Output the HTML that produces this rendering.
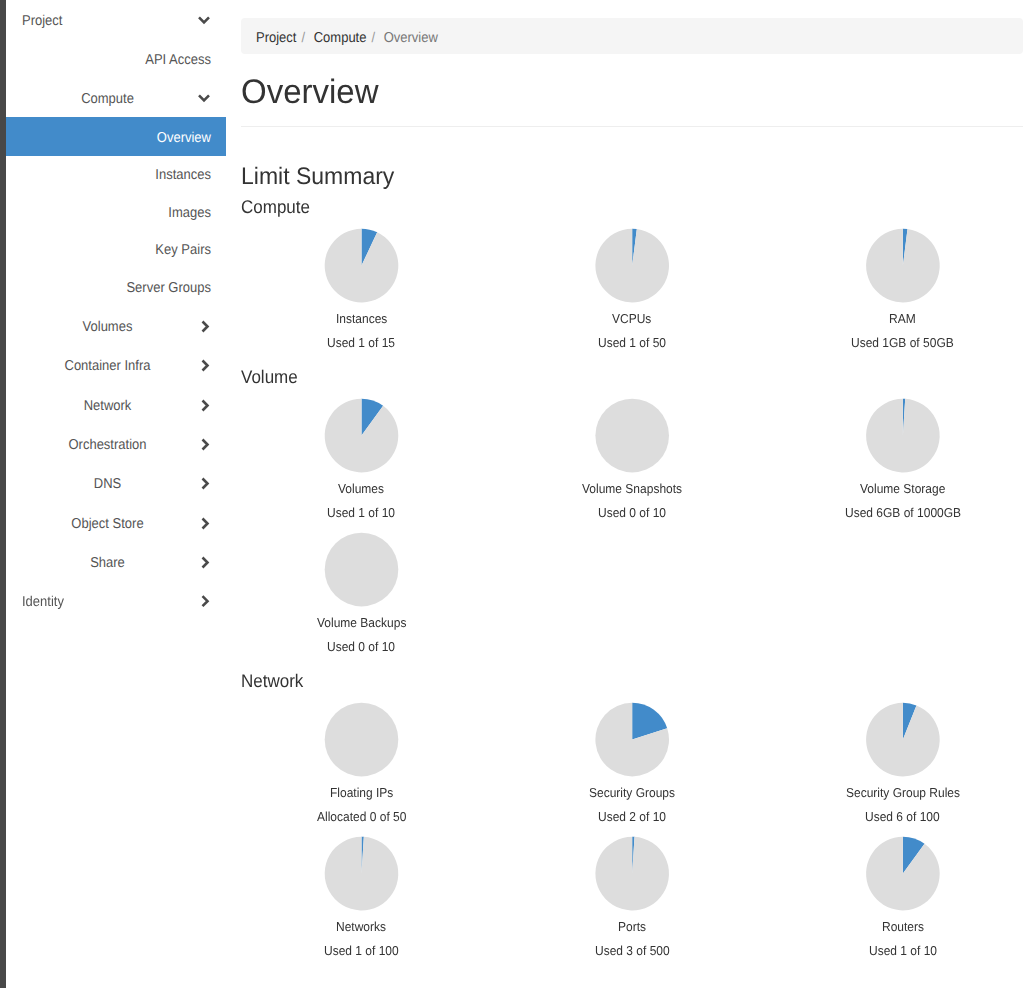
<!DOCTYPE html>
<html><head><meta charset="utf-8"><style>
html,body{margin:0;padding:0;background:#fff;width:1036px;height:988px;overflow:hidden;font-family:'Liberation Sans', sans-serif;text-rendering:geometricPrecision;}
</style></head><body>
<svg style="position:absolute;left:0;top:0" width="1036" height="988"><polyline points="199,17.3 204,22.3 209,17.3" fill="none" stroke="#4a4a4a" stroke-width="2.6" stroke-linecap="butt"/><polyline points="199,95.4 204,100.4 209,95.4" fill="none" stroke="#4a4a4a" stroke-width="2.6" stroke-linecap="butt"/><polyline points="202.5,321.5 207.5,326.5 202.5,331.5" fill="none" stroke="#4a4a4a" stroke-width="2.6" stroke-linecap="butt"/><polyline points="202.5,360.5 207.5,365.5 202.5,370.5" fill="none" stroke="#4a4a4a" stroke-width="2.6" stroke-linecap="butt"/><polyline points="202.5,400.5 207.5,405.5 202.5,410.5" fill="none" stroke="#4a4a4a" stroke-width="2.6" stroke-linecap="butt"/><polyline points="202.5,439.5 207.5,444.5 202.5,449.5" fill="none" stroke="#4a4a4a" stroke-width="2.6" stroke-linecap="butt"/><polyline points="202.5,478.5 207.5,483.5 202.5,488.5" fill="none" stroke="#4a4a4a" stroke-width="2.6" stroke-linecap="butt"/><polyline points="202.5,518.5 207.5,523.5 202.5,528.5" fill="none" stroke="#4a4a4a" stroke-width="2.6" stroke-linecap="butt"/><polyline points="202.5,557.5 207.5,562.5 202.5,567.5" fill="none" stroke="#4a4a4a" stroke-width="2.6" stroke-linecap="butt"/><polyline points="202.5,596.2 207.5,601.2 202.5,606.2" fill="none" stroke="#4a4a4a" stroke-width="2.6" stroke-linecap="butt"/><path d="M361.5,265.6 L361.5,228.8 A36.8,36.8 0 0 1 377.169,232.302 Z" fill="#428bca"/><path d="M361.5,265.6 L377.169,232.302 A36.8,36.8 0 1 1 361.5,228.8 Z" fill="#ddd"/><path d="M632.2,265.6 L632.2,228.8 A36.8,36.8 0 0 1 636.812,229.090 Z" fill="#428bca"/><path d="M632.2,265.6 L636.812,229.090 A36.8,36.8 0 1 1 632.2,228.8 Z" fill="#ddd"/><path d="M902.9000000000001,265.6 L902.9000000000001,228.8 A36.8,36.8 0 0 1 907.512,229.090 Z" fill="#428bca"/><path d="M902.9000000000001,265.6 L907.512,229.090 A36.8,36.8 0 1 1 902.9000000000001,228.8 Z" fill="#ddd"/><path d="M361.5,435.6 L361.5,398.8 A36.8,36.8 0 0 1 383.130,405.828 Z" fill="#428bca"/><path d="M361.5,435.6 L383.130,405.828 A36.8,36.8 0 1 1 361.5,398.8 Z" fill="#ddd"/><circle cx="632.2" cy="435.6" r="36.8" fill="#ddd"/><path d="M902.9000000000001,435.6 L902.9000000000001,398.8 A36.8,36.8 0 0 1 905.211,398.873 Z" fill="#428bca"/><path d="M902.9000000000001,435.6 L905.211,398.873 A36.8,36.8 0 1 1 902.9000000000001,398.8 Z" fill="#ddd"/><circle cx="361.5" cy="569.6" r="36.8" fill="#ddd"/><circle cx="361.5" cy="739.6" r="36.8" fill="#ddd"/><path d="M632.2,739.6 L632.2,702.8000000000001 A36.8,36.8 0 0 1 667.199,728.228 Z" fill="#428bca"/><path d="M632.2,739.6 L667.199,728.228 A36.8,36.8 0 1 1 632.2,702.8000000000001 Z" fill="#ddd"/><path d="M902.9000000000001,739.6 L902.9000000000001,702.8000000000001 A36.8,36.8 0 0 1 916.447,705.384 Z" fill="#428bca"/><path d="M902.9000000000001,739.6 L916.447,705.384 A36.8,36.8 0 1 1 902.9000000000001,702.8000000000001 Z" fill="#ddd"/><path d="M361.5,873.6 L361.5,836.8000000000001 A36.8,36.8 0 0 1 363.811,836.873 Z" fill="#428bca"/><path d="M361.5,873.6 L363.811,836.873 A36.8,36.8 0 1 1 361.5,836.8000000000001 Z" fill="#ddd"/><path d="M632.2,873.6 L632.2,836.8000000000001 A36.8,36.8 0 0 1 634.511,836.873 Z" fill="#428bca"/><path d="M632.2,873.6 L634.511,836.873 A36.8,36.8 0 1 1 632.2,836.8000000000001 Z" fill="#ddd"/><path d="M902.9000000000001,873.6 L902.9000000000001,836.8000000000001 A36.8,36.8 0 0 1 924.530,843.828 Z" fill="#428bca"/><path d="M902.9000000000001,873.6 L924.530,843.828 A36.8,36.8 0 1 1 902.9000000000001,836.8000000000001 Z" fill="#ddd"/></svg>
<div style="position:absolute;left:0;top:0;width:6px;height:988px;background:#484848"></div><div style="position:absolute;left:6px;top:117px;width:220px;height:39px;background:#428bca"></div><div style="position:absolute;top:11px;font-size:13px;line-height:20px;color:#555;white-space:nowrap;transform:scaleY(1.1);transform-origin:0 14px;left:22px;">Project</div><div style="position:absolute;top:50px;font-size:13px;line-height:20px;color:#555;white-space:nowrap;transform:scaleY(1.1);transform-origin:0 14px;left:-189px;width:400px;text-align:right;">API Access</div><div style="position:absolute;top:89px;font-size:13px;line-height:20px;color:#555;white-space:nowrap;transform:scaleY(1.1);transform-origin:0 14px;left:-92.5px;width:400px;text-align:center;">Compute</div><div style="position:absolute;top:128px;font-size:13px;line-height:20px;color:#fff;white-space:nowrap;transform:scaleY(1.1);transform-origin:0 14px;left:-189px;width:400px;text-align:right;">Overview</div><div style="position:absolute;top:165px;font-size:13px;line-height:20px;color:#555;white-space:nowrap;transform:scaleY(1.1);transform-origin:0 14px;left:-189px;width:400px;text-align:right;">Instances</div><div style="position:absolute;top:203px;font-size:13px;line-height:20px;color:#555;white-space:nowrap;transform:scaleY(1.1);transform-origin:0 14px;left:-189px;width:400px;text-align:right;">Images</div><div style="position:absolute;top:240px;font-size:13px;line-height:20px;color:#555;white-space:nowrap;transform:scaleY(1.1);transform-origin:0 14px;left:-189px;width:400px;text-align:right;">Key Pairs</div><div style="position:absolute;top:278px;font-size:13px;line-height:20px;color:#555;white-space:nowrap;transform:scaleY(1.1);transform-origin:0 14px;left:-189px;width:400px;text-align:right;">Server Groups</div><div style="position:absolute;top:317px;font-size:13px;line-height:20px;color:#555;white-space:nowrap;transform:scaleY(1.1);transform-origin:0 14px;left:-92.5px;width:400px;text-align:center;">Volumes</div><div style="position:absolute;top:356px;font-size:13px;line-height:20px;color:#555;white-space:nowrap;transform:scaleY(1.1);transform-origin:0 14px;left:-92.5px;width:400px;text-align:center;">Container Infra</div><div style="position:absolute;top:396px;font-size:13px;line-height:20px;color:#555;white-space:nowrap;transform:scaleY(1.1);transform-origin:0 14px;left:-92.5px;width:400px;text-align:center;">Network</div><div style="position:absolute;top:435px;font-size:13px;line-height:20px;color:#555;white-space:nowrap;transform:scaleY(1.1);transform-origin:0 14px;left:-92.5px;width:400px;text-align:center;">Orchestration</div><div style="position:absolute;top:474px;font-size:13px;line-height:20px;color:#555;white-space:nowrap;transform:scaleY(1.1);transform-origin:0 14px;left:-92.5px;width:400px;text-align:center;">DNS</div><div style="position:absolute;top:514px;font-size:13px;line-height:20px;color:#555;white-space:nowrap;transform:scaleY(1.1);transform-origin:0 14px;left:-92.5px;width:400px;text-align:center;">Object Store</div><div style="position:absolute;top:553px;font-size:13px;line-height:20px;color:#555;white-space:nowrap;transform:scaleY(1.1);transform-origin:0 14px;left:-92.5px;width:400px;text-align:center;">Share</div><div style="position:absolute;top:592px;font-size:13px;line-height:20px;color:#555;white-space:nowrap;transform:scaleY(1.1);transform-origin:0 14px;will-change:transform;left:22px;">Identity</div><div style="position:absolute;left:241px;top:18px;width:782px;height:36px;background:#f5f5f5;border-radius:4px"></div><div style="position:absolute;left:256px;top:28px;font-size:13px;line-height:20px;white-space:nowrap;color:#333;transform:scaleY(1.1);transform-origin:0 14px">Project<span style="color:#999;padding:0 5px">/&nbsp;</span>Compute<span style="color:#999;padding:0 5px">/&nbsp;</span><span style="color:#777">Overview</span></div><div style="position:absolute;top:82px;font-size:33px;line-height:20px;color:#333;white-space:nowrap;transform:scaleY(1.03);transform-origin:0 20.5px;will-change:transform;left:241px;">Overview</div><div style="position:absolute;left:241px;top:126px;width:782px;height:1px;background:#eee"></div><div style="position:absolute;top:166px;font-size:23px;line-height:20px;color:#333;white-space:nowrap;transform:scaleY(1.04);transform-origin:0 18px;will-change:transform;left:241px;">Limit Summary</div><div style="position:absolute;top:198px;font-size:17px;line-height:20px;color:#333;white-space:nowrap;transform:scaleY(1.08);transform-origin:0 21px;will-change:transform;left:241px;">Compute</div><div style="position:absolute;top:368px;font-size:17px;line-height:20px;color:#333;white-space:nowrap;transform:scaleY(1.08);transform-origin:0 21px;will-change:transform;left:241px;">Volume</div><div style="position:absolute;top:672px;font-size:17px;line-height:20px;color:#333;white-space:nowrap;transform:scaleY(1.08);transform-origin:0 21px;will-change:transform;left:241px;">Network</div><div style="position:absolute;top:309px;font-size:12px;line-height:20px;color:#333;white-space:nowrap;transform:scaleY(1.08);transform-origin:0 14px;will-change:transform;left:336px;">Instances</div><div style="position:absolute;top:333px;font-size:12px;line-height:20px;color:#333;white-space:nowrap;transform:scaleY(1.08);transform-origin:0 14px;will-change:transform;left:327px;">Used 1 of 15</div><div style="position:absolute;top:309px;font-size:12px;line-height:20px;color:#333;white-space:nowrap;transform:scaleY(1.08);transform-origin:0 14px;will-change:transform;left:612px;">VCPUs</div><div style="position:absolute;top:333px;font-size:12px;line-height:20px;color:#333;white-space:nowrap;transform:scaleY(1.08);transform-origin:0 14px;will-change:transform;left:598px;">Used 1 of 50</div><div style="position:absolute;top:309px;font-size:12px;line-height:20px;color:#333;white-space:nowrap;transform:scaleY(1.08);transform-origin:0 14px;will-change:transform;left:889px;">RAM</div><div style="position:absolute;top:333px;font-size:12px;line-height:20px;color:#333;white-space:nowrap;transform:scaleY(1.08);transform-origin:0 14px;will-change:transform;left:851px;">Used 1GB of 50GB</div><div style="position:absolute;top:479px;font-size:12px;line-height:20px;color:#333;white-space:nowrap;transform:scaleY(1.08);transform-origin:0 14px;will-change:transform;left:338px;">Volumes</div><div style="position:absolute;top:503px;font-size:12px;line-height:20px;color:#333;white-space:nowrap;transform:scaleY(1.08);transform-origin:0 14px;will-change:transform;left:327px;">Used 1 of 10</div><div style="position:absolute;top:479px;font-size:12px;line-height:20px;color:#333;white-space:nowrap;transform:scaleY(1.08);transform-origin:0 14px;will-change:transform;left:582px;">Volume Snapshots</div><div style="position:absolute;top:503px;font-size:12px;line-height:20px;color:#333;white-space:nowrap;transform:scaleY(1.08);transform-origin:0 14px;will-change:transform;left:598px;">Used 0 of 10</div><div style="position:absolute;top:479px;font-size:12px;line-height:20px;color:#333;white-space:nowrap;transform:scaleY(1.08);transform-origin:0 14px;will-change:transform;left:860px;">Volume Storage</div><div style="position:absolute;top:503px;font-size:12px;line-height:20px;color:#333;white-space:nowrap;transform:scaleY(1.08);transform-origin:0 14px;will-change:transform;left:845px;">Used 6GB of 1000GB</div><div style="position:absolute;top:613px;font-size:12px;line-height:20px;color:#333;white-space:nowrap;transform:scaleY(1.08);transform-origin:0 14px;will-change:transform;left:317px;">Volume Backups</div><div style="position:absolute;top:637px;font-size:12px;line-height:20px;color:#333;white-space:nowrap;transform:scaleY(1.08);transform-origin:0 14px;will-change:transform;left:327px;">Used 0 of 10</div><div style="position:absolute;top:783px;font-size:12px;line-height:20px;color:#333;white-space:nowrap;transform:scaleY(1.08);transform-origin:0 14px;will-change:transform;left:330px;">Floating IPs</div><div style="position:absolute;top:807px;font-size:12px;line-height:20px;color:#333;white-space:nowrap;transform:scaleY(1.08);transform-origin:0 14px;will-change:transform;left:317px;">Allocated 0 of 50</div><div style="position:absolute;top:783px;font-size:12px;line-height:20px;color:#333;white-space:nowrap;transform:scaleY(1.08);transform-origin:0 14px;will-change:transform;left:589px;">Security Groups</div><div style="position:absolute;top:807px;font-size:12px;line-height:20px;color:#333;white-space:nowrap;transform:scaleY(1.08);transform-origin:0 14px;will-change:transform;left:598px;">Used 2 of 10</div><div style="position:absolute;top:783px;font-size:12px;line-height:20px;color:#333;white-space:nowrap;transform:scaleY(1.08);transform-origin:0 14px;will-change:transform;left:846px;">Security Group Rules</div><div style="position:absolute;top:807px;font-size:12px;line-height:20px;color:#333;white-space:nowrap;transform:scaleY(1.08);transform-origin:0 14px;will-change:transform;left:865px;">Used 6 of 100</div><div style="position:absolute;top:917px;font-size:12px;line-height:20px;color:#333;white-space:nowrap;transform:scaleY(1.08);transform-origin:0 14px;will-change:transform;left:336px;">Networks</div><div style="position:absolute;top:941px;font-size:12px;line-height:20px;color:#333;white-space:nowrap;transform:scaleY(1.08);transform-origin:0 14px;will-change:transform;left:324px;">Used 1 of 100</div><div style="position:absolute;top:917px;font-size:12px;line-height:20px;color:#333;white-space:nowrap;transform:scaleY(1.08);transform-origin:0 14px;will-change:transform;left:618px;">Ports</div><div style="position:absolute;top:941px;font-size:12px;line-height:20px;color:#333;white-space:nowrap;transform:scaleY(1.08);transform-origin:0 14px;will-change:transform;left:595px;">Used 3 of 500</div><div style="position:absolute;top:917px;font-size:12px;line-height:20px;color:#333;white-space:nowrap;transform:scaleY(1.08);transform-origin:0 14px;will-change:transform;left:882px;">Routers</div><div style="position:absolute;top:941px;font-size:12px;line-height:20px;color:#333;white-space:nowrap;transform:scaleY(1.08);transform-origin:0 14px;will-change:transform;left:869px;">Used 1 of 10</div>
</body></html>
